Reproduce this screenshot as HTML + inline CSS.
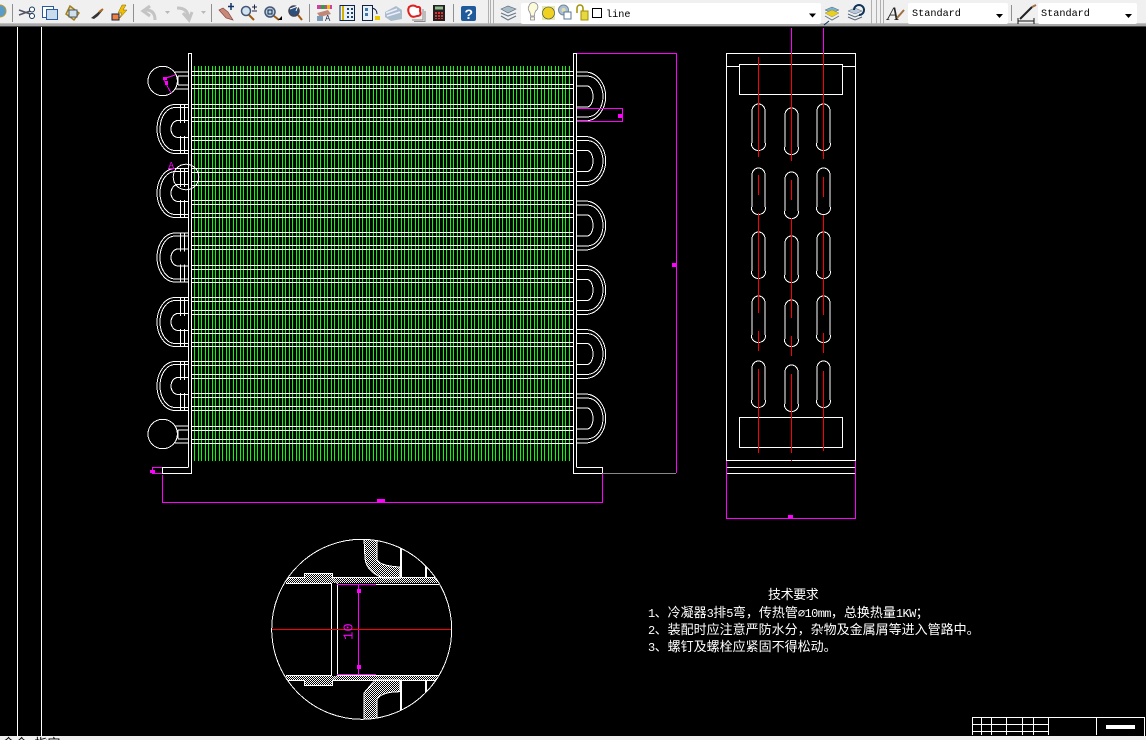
<!DOCTYPE html>
<html>
<head>
<meta charset="utf-8">
<style>
html,body{margin:0;padding:0;background:#000;width:1146px;height:740px;overflow:hidden}
svg{display:block;position:absolute;left:0;top:0}
.cad{shape-rendering:crispEdges}
.w{stroke:#fff;fill:none;stroke-width:1}
.m{stroke:#f0f;fill:none;stroke-width:1}
.r{stroke:#f00;fill:none;stroke-width:1}
.cn{font-family:"WenQuanYi Zen Hei","Noto Sans CJK SC",sans-serif;font-size:13px;fill:#fff}
.cn tspan{font-family:"Liberation Mono",monospace;font-size:12px;letter-spacing:-.6px}
.mono{font-family:"Liberation Mono",monospace;font-size:10.2px;fill:#000}
</style>
</head>
<body>
<svg width="1146" height="740" viewBox="0 0 1146 740" xmlns="http://www.w3.org/2000/svg">
<defs>
<pattern id="h" width="2" height="2" patternUnits="userSpaceOnUse"><rect width="2" height="2" fill="#000"/><rect width="1" height="1" fill="#fff"/><rect x="1" y="1" width="1" height="1" fill="#fff"/></pattern>
<pattern id="fin" x="194" y="66" width="7" height="10" patternUnits="userSpaceOnUse"><rect x="0" width="1" height="10" fill="#0f0"/><rect x="4" width="1" height="10" fill="#0f0"/></pattern>
<clipPath id="dc"><circle cx="361.7" cy="629.3" r="90"/></clipPath>
<g id="row"><path class="w" d="M192 -8.500H574M192 -4.500H574M192 4.500H574M192 8.500H574"/></g>
<g id="lb"><path class="w" d="M188 -24.500H175A18 24.500 0 0 0 175 24.500H188M188 -21.500H175A15 21.500 0 0 0 175 21.500H188M188 -8.500H178A7 8.500 0 0 0 178 8.500H188M180.500 -25V-6M184.500 -25V-6M180.500 7V25M184.500 7V25"/></g>
<g id="rb"><path class="w" d="M577 -24.500H585A20.700 24.500 0 0 1 585 24.500H577M577 -20.500H587A16 20.500 0 0 1 587 20.500H577M577 -10.500H587A6 10.500 0 0 1 587 10.500H577"/></g>
<g id="sl"><path class="w" d="M1 8V7A6.500 7 0 0 1 14 7V38L14.500 40A7 6.500 0 0 1 0.500 40L1 38Z"/></g>
</defs>

<rect width="1146" height="740" fill="#000"/>

<g class="cad">
<!-- border -->
<path class="w" d="M17.500 27V736M41.500 27V736"/>
<path class="w" d="M1144.500 717V736"/>

<!-- fins -->
<rect x="194" y="66" width="378" height="395" fill="url(#fin)"/>

<!-- rows -->
<use href="#row" y="80"/><use href="#row" y="113"/><use href="#row" y="145"/><use href="#row" y="177"/>
<use href="#row" y="209"/><use href="#row" y="241"/><use href="#row" y="274"/><use href="#row" y="306"/>
<use href="#row" y="338"/><use href="#row" y="370"/><use href="#row" y="402"/><use href="#row" y="435"/>

<!-- plates -->
<path class="w" d="M188.500 467V53.500H191.500V473.500H162.500V467.500H188.500"/>
<path class="w" d="M576.500 467V53.500H573.500V473.500H602.500V467.500H576.500"/>

<!-- bends -->
<use href="#lb" y="129"/><use href="#lb" y="193"/><use href="#lb" y="257.500"/><use href="#lb" y="322"/><use href="#lb" y="386"/>
<use href="#rb" y="96.500"/><use href="#rb" y="161"/><use href="#rb" y="225.500"/><use href="#rb" y="290"/><use href="#rb" y="354"/><use href="#rb" y="418.500"/>

<!-- end circles -->
<circle class="w" cx="162.700" cy="81" r="14.700"/>
<circle class="w" cx="162.700" cy="434" r="14.700"/>
<path class="w" d="M175 72H188M178 76V85M175 89H188M178 76H188M178 85H188"/>
<path class="w" d="M175 426H188M178 430V439M175 443H188M178 430H188M178 439H188"/>
<circle class="w" cx="186" cy="177" r="12.800"/>

<!-- magenta in circle -->
<path class="m" d="M163 79L175 75M164 80L171 93"/>
<rect x="163" y="77" width="4" height="3" fill="#f0f"/>
<rect x="165" y="81" width="3" height="4" fill="#f0f"/>
<path class="m" d="M168 168.500H175"/>

<!-- main dims -->
<path class="m" d="M577 53.500H676.500V473M676.500 473"/>
<path d="M602 473.500H676" stroke="#888" fill="none"/>
<rect x="672" y="263" width="4" height="4" fill="#f0f"/>
<path class="m" d="M577 108.500H623M577 121.500H623M622.500 108V122"/>
<rect x="618" y="114" width="4" height="4" fill="#f0f"/>
<path class="m" d="M162.500 475V503M602.500 474V503M162 502.500H603"/>
<rect x="377" y="499" width="8" height="3" fill="#f0f"/>
<path class="m" d="M152 467.500H162M152 473.500H162M152.500 467V473"/>
<rect x="150" y="470" width="5" height="3" fill="#f0f"/>

<!-- side view -->
<path class="w" d="M726.500 53.500H855.500V460.500H726.500ZM726.500 467.500H855.500M726.500 473.500H855.500M727 66.500H739M843 66.500H855"/>
<rect class="w" x="739.500" y="64.500" width="103" height="30"/>
<rect class="w" x="739.500" y="417.500" width="103" height="30"/>

<path class="m" d="M791.500 28V53M823.500 28V53"/>
<path class="m" d="M726.500 461V519M855.500 461V519M726 518.500H856"/>
<rect x="788" y="515" width="5" height="3" fill="#f0f"/>

<use href="#sl" x="751" y="104"/><use href="#sl" x="751" y="168"/><use href="#sl" x="751" y="232"/><use href="#sl" x="751" y="296"/><use href="#sl" x="751" y="361"/>
<use href="#sl" x="784" y="108"/><use href="#sl" x="784" y="172"/><use href="#sl" x="784" y="236"/><use href="#sl" x="784" y="300"/><use href="#sl" x="784" y="365"/>
<use href="#sl" x="816" y="104"/><use href="#sl" x="816" y="168"/><use href="#sl" x="816" y="232"/><use href="#sl" x="816" y="296"/><use href="#sl" x="816" y="361"/>

<path class="r" d="M758.500 57V157M758.500 175V195M758.500 213V313M758.500 331V351M758.500 369V453"/>
<path class="r" d="M791.500 53V161M791.500 180V200M791.500 218V318M791.500 336V356M791.500 374V453M791.500 460V461"/>
<path class="r" d="M823.500 53V159M823.500 177V197M823.500 215V315M823.500 333V353M823.500 371V451"/>

<!-- detail circle -->
<g clip-path="url(#dc)">
<rect x="286" y="578" width="153" height="5" fill="url(#h)"/>
<rect x="286" y="676" width="153" height="5" fill="url(#h)"/>
<rect x="304" y="573" width="29" height="5" fill="url(#h)"/>
<rect x="304" y="681" width="29" height="5" fill="url(#h)"/>
<path d="M364 539H377V560Q381 566 400 567V578H383Q367 572 365 559Z" fill="url(#h)" stroke="#fff"/>
<path d="M364 719H377V700Q380 692 400 691.700V680H375L364 693Z" fill="url(#h)" stroke="#fff"/>
<path class="w" d="M286 577.500H304M333 577.500H439M286 583.500H332M337 584.500H439M286 675.500H332M337 675.500H439M286 680.500H304M333 680.500H439"/>
<path class="w" d="M304.500 573V578M332.500 573V578M304.500 573.500H332M304.500 681V686M332.500 681V686M304.500 685.500H332M332 578L338 584M332 681L338 675"/>
<path class="w" d="M331.500 583V676M337.500 584V675"/>
<path class="w" d="M400.500 548V578M401.500 548V578M425.500 565V578M426.500 565V578M427 565L437 578"/>
<path class="w" d="M400.500 680V711M401.500 680V711M425.500 680V693M426.500 680V693M427 692L436 680"/>
<path d="M337 584.500H376M337 674.500H376" stroke="#f0f" stroke-width="1" fill="none"/>
<path class="m" d="M358.500 584V674"/>
<rect x="357" y="589" width="4" height="4" fill="#f0f"/>
<rect x="357" y="665" width="4" height="4" fill="#f0f"/>
<path class="r" d="M271 629.500H452"/>
</g>
<circle class="w" cx="361.700" cy="629.300" r="90"/>

<!-- title block -->
<path class="w" d="M972.500 717.500H1144M972.500 724.500H1048.500M972.500 731.500H1048.500M972.500 717V735M981.500 717V735M991.500 717V735M1006.500 717V735M1022.500 717V735M1033.500 717V735M1048.500 717V735M1096.500 717V735"/>
<rect x="1106" y="725" width="29" height="4" fill="#fff"/>
</g>

<text x="168.500" y="168" font-family="Liberation Mono,monospace" font-size="9" fill="#f0f">A</text>
<text transform="translate(352.500 640) rotate(-90)" font-family="Liberation Mono,monospace" font-size="14" fill="#f0f">10</text>

<!-- notes -->
<text class="cn" x="768" y="599" style="letter-spacing:-.4px">技术要求</text>
<text class="cn" x="648" y="617"><tspan>1</tspan>、冷凝器<tspan>3</tspan>排<tspan>5</tspan>弯，传热管<tspan>⌀10mm</tspan>，总换热量<tspan>1KW</tspan>；</text>
<text class="cn" x="648" y="634"><tspan>2</tspan>、装配时应注意严防水分，杂物及金属屑等进入管路中。</text>
<text class="cn" x="648" y="651"><tspan>3</tspan>、螺钉及螺栓应紧固不得松动。</text>

<!-- status -->
<rect y="736" width="1146" height="4" fill="#f0f0f0"/>
<text x="2" y="748" font-family="'Noto Sans CJK SC',sans-serif" font-size="13" fill="#000">命令: 指定</text>

<!-- toolbar -->
<rect width="1146" height="24" fill="#f0f0f0"/>
<rect y="23" width="1146" height="1" fill="#c0c0c0"/>
<rect y="24" width="1146" height="2" fill="#a8a8a8"/>
<rect y="26" width="1146" height="1" fill="#444"/>

<!-- separators -->
<path d="M12.500 4V22M133.500 4V22M211.500 4V22M309.500 4V22M453.500 4V22M1011.500 5V21" stroke="#909090" shape-rendering="crispEdges"/>
<path d="M488.500 0V24M490.500 0V24M493.500 0V24M871.500 0V24M876.500 0V24M880.500 0V24M883.500 0V24" stroke="#b0b0b0" shape-rendering="crispEdges"/>

<!-- globe -->
<circle cx="0" cy="11" r="6" fill="#5b9bc9" stroke="#b89a30"/>
<!-- scissors -->
<path d="M19 10L33 15M19 15L33 10" stroke="#556" stroke-width="1.500"/>
<circle cx="32" cy="9.500" r="2.500" fill="#fff" stroke="#135"/><circle cx="32" cy="16" r="2.500" fill="#fff" stroke="#135"/>
<!-- copy -->
<rect x="42.500" y="6.500" width="11" height="11" fill="#fff" stroke="#2a5a9a"/>
<rect x="46.500" y="9.500" width="11" height="10" fill="#c8dcec" stroke="#2a5a9a"/>
<!-- paste -->
<path d="M70 6L79 13L74 20L66 14Z" fill="#e8d8a0" stroke="#a08020" stroke-width="1.500"/>
<rect x="69" y="10" width="8" height="7" fill="#cfe0ee" stroke="#456"/>
<!-- brush -->
<path d="M91 18L96 14L102 9L103 10L98 16L94 19Z" fill="#333"/><path d="M99 12L103 9" stroke="#b06820" stroke-width="2"/>
<!-- match -->
<rect x="112" y="14" width="7" height="6" fill="#f08040" stroke="#124"/>
<path d="M122 5L118 13H122L119 19L127 10H123L126 5Z" fill="#f0c000" stroke="#806000" stroke-width=".5"/>
<!-- undo redo -->
<path d="M155 20Q155 10 146 10M150 6L143 11L150 16" fill="none" stroke="#c4c4c4" stroke-width="3"/>
<path d="M165 11H170L167.500 14Z" fill="#b8b8b8"/>
<path d="M177 8Q188 8 188 17M183 13L189 20L192 12" fill="none" stroke="#c4c4c4" stroke-width="3"/>
<path d="M201 11H206L203.500 14Z" fill="#b8b8b8"/>
<!-- pan -->
<path d="M219 10L226 18L233 20L228 12L223 8Z" fill="#c88878" stroke="#844" stroke-width=".7"/>
<path d="M231 3V10M228 6.500H234" stroke="#136" stroke-width="1.500"/>
<!-- zoom icons -->
<circle cx="246" cy="11" r="4.500" fill="#d0e4f0" stroke="#457" stroke-width="1.500"/><path d="M249 15L254 20" stroke="#a05a10" stroke-width="2"/>
<path d="M252 7H257M254.500 4.500V9.500M252 11H257" stroke="#224" stroke-width="1"/>
<circle cx="270" cy="12" r="5" fill="#b8d0e0" stroke="#457" stroke-width="1.500"/><rect x="268" y="10" width="4" height="4" fill="none" stroke="#124"/><path d="M274 16L279 20" stroke="#a05a10" stroke-width="2"/><path d="M278 20H282V16Z" fill="#000"/>
<circle cx="294" cy="11" r="5" fill="#2a5080" stroke="#445" stroke-width="1.500"/><path d="M290 9L298 6L296 11" fill="none" stroke="#fff"/><path d="M298 15L302 20" stroke="#a05a10" stroke-width="2"/>
<!-- properties -->
<rect x="317" y="5" width="15" height="4" fill="#d040a0"/><rect x="321" y="5" width="4" height="4" fill="#30a040"/><rect x="327" y="5" width="3" height="4" fill="#f0c000"/>
<path d="M317 13L328 10L331 14L320 17Z" fill="#c08878"/>
<text x="325" y="21" font-family="Liberation Sans" font-size="8" fill="#124">A</text>
<rect x="317" y="16" width="6" height="5" fill="#7a9ab8"/>
<!-- design center -->
<rect x="340" y="5.500" width="14.500" height="15" fill="#e8f0f8" stroke="#124"/>
<path d="M343 6V20" stroke="#d0b000" stroke-width="2"/>
<path d="M347 8h2v2h-2zM351 8h2v2h-2zM347 12h2v2h-2zM351 12h2v2h-2zM347 16h2v2h-2zM351 16h2v2h-2z" fill="#246"/>
<!-- palettes -->
<rect x="362.500" y="5.500" width="10" height="15" fill="#e8f0f8" stroke="#124"/><path d="M365 8h3v3h-3zM365 13h3v3h-3z" fill="#47a"/>
<path d="M372 8Q377 9 377 14" fill="none" stroke="#124"/><rect x="375" y="16" width="5" height="4" fill="#e8c800"/>
<!-- sheet -->
<path d="M385 12L396 6L402 10L402 19L391 21L385 17Z" fill="#a8bccc"/><path d="M386 13L397 9M387 16L400 12" stroke="#eef" stroke-width="1.500"/>
<!-- markup -->
<path d="M409 7Q413 4 417 7Q421 6 420 11Q422 16 417 16Q412 18 410 15Q407 11 409 7Z" fill="#fff" stroke="#e02020" stroke-width="2"/>
<path d="M423 9V20H412M425 11V21.500H414" fill="none" stroke="#888"/>
<!-- calc -->
<rect x="433" y="5" width="12" height="16" fill="#222"/><rect x="435" y="6.500" width="8" height="3" fill="#8fbc8f"/>
<path d="M435 12h2v2h-2zM438 12h2v2h-2zM441 12h2v2h-2zM435 15h2v2h-2zM438 15h2v2h-2zM441 15h2v2h-2zM435 18h2v1h-2zM438 18h2v1h-2zM441 18h2v1h-2z" fill="#e03030"/>
<!-- help -->
<rect x="461" y="6" width="15" height="15" rx="2" fill="#1f5a9a"/>
<text x="464.500" y="19" font-family="Liberation Sans" font-weight="bold" font-size="14" fill="#fff">?</text>

<!-- layers -->
<path d="M501 9L508 6L516 9L508 13Z" fill="#a8bcc8" stroke="#567" stroke-width=".6"/>
<path d="M501 13L508 16L516 13M501 16L508 20L516 16" fill="none" stroke="#678" stroke-width="1.200"/>
<!-- layer combo -->
<rect x="521" y="3" width="300" height="21" rx="2" fill="#fff"/>
<path d="M529 6A4.500 4.500 0 1 1 535.500 11Q534.500 13 534.500 16H530.500Q530.500 13 529 11Q527.500 8 529 6ZM530.500 17H534.500V20H530.500Z" fill="#fbfbd8" stroke="#889" stroke-width=".8"/>
<rect x="542" y="6" width="13" height="14" fill="#e8e8b0"/><circle cx="548.500" cy="13" r="6" fill="#f0d020" stroke="#245" stroke-width=".6"/>
<circle cx="563.500" cy="10" r="5" fill="#a8c0d8" stroke="#789"/><circle cx="563.500" cy="10" r="2" fill="#e8e0a0"/><rect x="564" y="12" width="7" height="7" fill="#fff" stroke="#579"/>
<path d="M577 13V8A3 3 0 0 1 583 8V12" fill="none" stroke="#a09000" stroke-width="1.500"/><rect x="581" y="11" width="7" height="9" fill="#e8d840" stroke="#a09000"/>
<rect x="592.500" y="8.500" width="9" height="9" fill="#fff" stroke="#000"/>
<text class="mono" x="606" y="17">line</text>
<path d="M809 13.500H816L812.500 17.500Z" fill="#000"/>
<!-- layer icons -->
<path d="M825 10L832 7L839 10L832 13Z" fill="#7ab0d0" stroke="#567" stroke-width=".5"/>
<path d="M825 13L832 17L839 13L832 10Z" fill="#e8d020" stroke="#985" stroke-width=".5"/>
<path d="M825 16L832 20L839 16" fill="none" stroke="#678"/>
<path d="M824 25L829 21" stroke="#135"/>
<path d="M848 11L855 8L862 11L855 14Z" fill="#b8c8d8" stroke="#567" stroke-width=".5"/>
<path d="M848 14L855 17L862 14M848 17L855 20L862 17" fill="none" stroke="#567"/>
<path d="M854 10A5 5 0 1 1 859 15" fill="none" stroke="#135" stroke-width="2"/>
<!-- text style -->
<text x="887" y="20" font-family="Liberation Serif" font-style="italic" font-size="19" fill="#222">A</text>
<path d="M897 18L904 10" stroke="#a07040" stroke-width="2"/>
<rect x="908" y="3" width="100" height="21" rx="2" fill="#fff"/>
<text class="mono" x="912" y="16">Standard</text>
<path d="M996 14H1003L999.500 18Z" fill="#000"/>
<!-- dim style -->
<path d="M1018 21H1034M1018 18V24M1034 18V24" stroke="#111"/>
<path d="M1020 19L1032 7" stroke="#222" stroke-width="2"/><path d="M1032 7L1036 5" stroke="#a07040" stroke-width="2"/>
<rect x="1038" y="3" width="99" height="21" rx="2" fill="#fff"/>
<text class="mono" x="1041" y="16">Standard</text>
<path d="M1125 14H1132L1128.500 18Z" fill="#000"/>
</svg>
</body>
</html>
